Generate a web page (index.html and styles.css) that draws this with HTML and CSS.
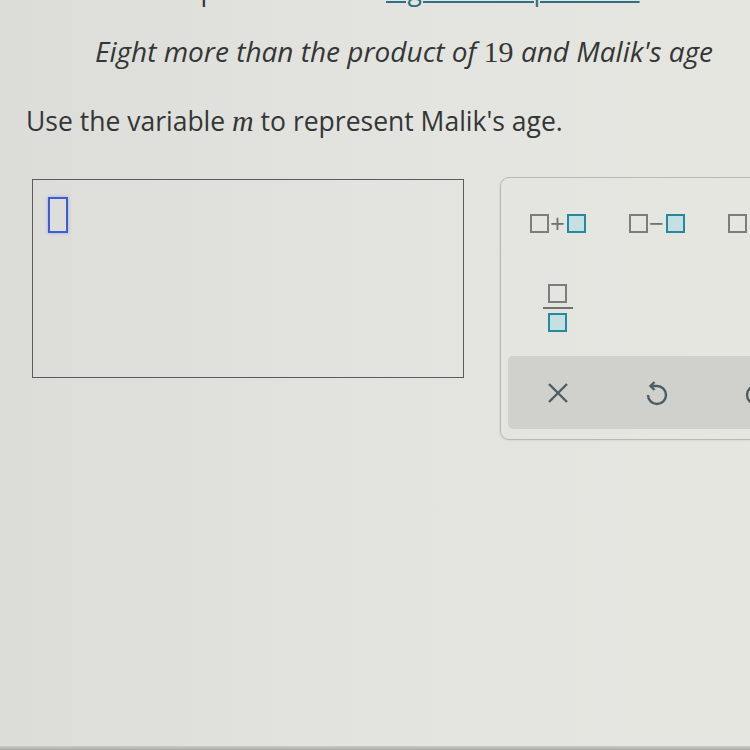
FILE: index.html
```html
<!DOCTYPE html>
<html>
<head>
<meta charset="utf-8">
<link rel="stylesheet" href="styles.css">
</head>
<body>
<div class="page">
  <p class="intro">Translate this phrase into an <a class="term" href="#">algebraic expression</a>.</p>
  <p class="phrase">Eight more than the product of <span class="num">19</span> and Malik's age</p>
  <p class="hint">Use the variable <span class="var">m</span> to represent Malik's age.</p>
  <div class="answer-row">
    <div class="answer-box"><span class="cursor"></span></div>
    <div class="keypad">
      <div class="keys">
        <button class="key"><span class="sq"></span><span class="op">+</span><span class="sq teal"></span></button>
        <button class="key"><span class="sq"></span><span class="op minus">−</span><span class="sq teal"></span></button>
        <button class="key"><span class="sq"></span><span class="op">·</span><span class="sq teal"></span></button>
        <button class="key"><span class="frac"><span class="sq"></span><span class="bar"></span><span class="sq teal"></span></span></button>
      </div>
      <div class="actions">
        <button class="act"><svg width="22" height="22" viewBox="0 0 22 22"><path d="M2 2 L20 20 M20 2 L2 20" stroke="#4c5d63" stroke-width="2.4" fill="none"/></svg></button>
        <button class="act"><svg width="24" height="30" viewBox="0 0 24 30"><path d="M6 8 H12 A9 9 0 1 1 3 17" stroke="#4c5d63" stroke-width="2.4" fill="none"/><path d="M9.5 4 L5.5 8 L9.5 12" stroke="#4c5d63" stroke-width="2.4" fill="none"/></svg></button>
        <button class="act"><svg width="24" height="30" viewBox="0 0 24 30"><path d="M18 8 H12 A9 9 0 1 0 21 17" stroke="#4c5d63" stroke-width="2.4" fill="none"/><path d="M14.5 4 L18.5 8 L14.5 12" stroke="#4c5d63" stroke-width="2.4" fill="none"/></svg></button>
      </div>
    </div>
  </div>
  <div class="bezel"></div>
</div>
</body>
</html>
```
FILE: styles.css
```css
html, body {
  margin: 0;
  padding: 0;
}
body {
  width: 750px;
  height: 750px;
  overflow: hidden;
  background: linear-gradient(90deg, #dcddd8 0%, #e3e4df 50%, #e6e6e1 100%);
  font-family: "Open Sans", "DejaVu Sans", sans-serif;
  color: #343636;
}
.page {
  height: 750px;
  display: flex;
  flex-direction: column;
}
.intro {
  margin: -28px 0 0 27px;
  font-size: 26.5px;
  line-height: 36px;
  white-space: nowrap;
}
.term {
  color: #2f6f86;
  text-decoration: underline;
  text-decoration-thickness: 2px;
  text-underline-offset: 1px;
}
.phrase {
  margin: 25px 0 0 95px;
  font-size: 28px;
  font-style: italic;
  line-height: 36px;
  white-space: nowrap;
}
.num {
  font-family: "Liberation Serif", serif;
  font-style: normal;
  font-size: 30px;
}
.hint {
  margin: 33px 0 0 26px;
  font-size: 26.5px;
  line-height: 36px;
  white-space: nowrap;
}
.var {
  font-family: "Liberation Serif", serif;
  font-style: italic;
  font-size: 30px;
}
.answer-row {
  margin-top: 40px;
  display: flex;
  align-items: flex-start;
  padding-left: 32px;
  gap: 36px;
}
.answer-box {
  flex: none;
  width: 432px;
  height: 199px;
  border: 1px solid #5a5c5c;
  padding: 17px 0 0 15px;
  box-sizing: border-box;
}
.cursor {
  display: block;
  width: 20px;
  height: 36px;
  box-sizing: border-box;
  border: 2px solid #3f5bd6;
  box-shadow: 0 0 3px rgba(80, 110, 230, 0.5);
}
.keypad {
  flex: none;
  width: 330px;
  margin-top: -2px;
  border: 1px solid #b7b9b4;
  border-radius: 9px;
  padding: 12px 0 10px 7px;
  box-shadow: -1px 1px 2px rgba(0,0,0,0.06);
}
.keys {
  display: grid;
  grid-template-columns: repeat(3, 99px);
  grid-auto-rows: 66px;
  row-gap: 19px;
}
.key, .act {
  border: none;
  background: none;
  padding: 0;
  display: flex;
  align-items: center;
  justify-content: center;
  font-family: inherit;
}
.key .op {
  color: #6f7272;
  font-size: 26px;
  line-height: 18px;
  width: 18px;
  text-align: center;
}
.sq {
  display: block;
  width: 19px;
  height: 19px;
  box-sizing: border-box;
  border: 2.5px solid #7b7d7d;
}
.sq.teal {
  border-color: #24899e;
  background: #c6dfe2;
}
.frac {
  display: flex;
  flex-direction: column;
  align-items: center;
  gap: 4px;
}
.frac .bar {
  display: block;
  width: 30px;
  height: 2px;
  background: #6f7272;
}
.actions {
  margin-top: 15px;
  display: grid;
  grid-template-columns: repeat(3, 99px);
  height: 73px;
  background: #d0d1cc;
  border-radius: 5px 0 0 5px;
}
.bezel {
  margin-top: auto;
  height: 4px;
  background: linear-gradient(180deg, #c9cbc6, #a8aba6);
}
```
